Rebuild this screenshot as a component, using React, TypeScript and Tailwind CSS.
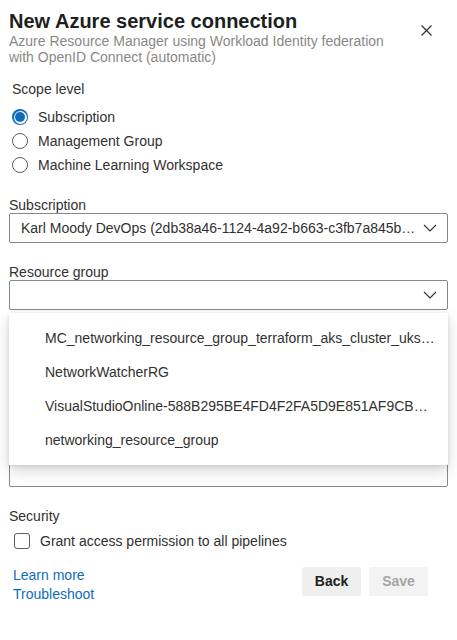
import { useState } from "react";

const scopes = ["Subscription", "Management Group", "Machine Learning Workspace"];

const resourceGroups = [
  "MC_networking_resource_group_terraform_aks_cluster_uksouth",
  "NetworkWatcherRG",
  "VisualStudioOnline-588B295BE4FD4F2FA5D9E851AF9CB…",
  "networking_resource_group",
];

const Chevron = () => (
  <svg width="14" height="8" viewBox="0 0 14 8" fill="none" className="shrink-0">
    <path d="M1 1l6 6 6-6" stroke="#323130" strokeWidth="1.1" />
  </svg>
);

const Radio = ({ checked }: { checked: boolean }) =>
  checked ? (
    <span className="flex h-4 w-4 items-center justify-center rounded-full bg-[#0f6cbd]">
      <span className="flex h-[13px] w-[13px] items-center justify-center rounded-full bg-white">
        <span className="block h-[10px] w-[10px] rounded-full bg-[#0f6cbd]" />
      </span>
    </span>
  ) : (
    <span className="block h-4 w-4 rounded-full border border-[#605e5c] bg-white" />
  );

export default function App() {
  const [scope, setScope] = useState(0);

  return (
    <div className="h-[640px] w-[457px] bg-white px-[9px] pt-[9px] text-[14px] text-[#323130] font-['Liberation_Sans',Arial,sans-serif]">
      {/* header */}
      <div className="flex items-start justify-between">
        <div>
          <h1 className="text-[20px] font-bold leading-6 text-[#201f1e]">New Azure service connection</h1>
          <p className="leading-4 text-[#8a8886]">
            Azure Resource Manager using Workload Identity federation
            <br />
            with OpenID Connect (automatic)
          </p>
        </div>
        <button className="mr-[14px] mt-[13px] flex h-4 w-4 items-center justify-center">
          <svg width="11" height="11" viewBox="0 0 11 11">
            <path d="M0.5 0.5l10 10M10.5 0.5l-10 10" stroke="#323130" strokeWidth="1.2" />
          </svg>
        </button>
      </div>

      {/* scope */}
      <div className="mt-[14px] pl-[3px] leading-5">Scope level</div>
      <div className="mt-[6px] flex flex-col">
        {scopes.map((s, i) => (
          <label key={s} className="flex h-6 cursor-pointer items-center" onClick={() => setScope(i)}>
            <span className="ml-[3px] mr-[10px] flex shrink-0">
              <Radio checked={scope === i} />
            </span>
            <span>{s}</span>
          </label>
        ))}
      </div>

      {/* subscription */}
      <div className="mt-5 leading-4">Subscription</div>
      <div className="flex h-[30px] items-center gap-[6px] rounded-[2px] border border-[#8a8886] pl-[11px] pr-[10px]">
        <span className="min-w-0 flex-1 truncate">
          Karl Moody DevOps (2db38a46-1124-4a92-b663-c3fb7a845b2e)
        </span>
        <Chevron />
      </div>

      {/* resource group */}
      <div className="mt-[21px] leading-4">Resource group</div>
      <div className="relative">
        <div className="flex h-[30px] items-center justify-end rounded-[2px] border border-[#8a8886] pr-[10px]">
          <Chevron />
        </div>

        {/* dropdown */}
        <div className="absolute left-0 right-0 top-[33px] z-10 bg-white py-2 shadow-[0_6px_14px_rgba(0,0,0,0.16),0_1px_4px_rgba(0,0,0,0.1)]">
          {resourceGroups.map((g) => (
            <div key={g} className="flex h-[34px] items-center pl-9 pr-[10px]">
              <span className="truncate">{g}</span>
            </div>
          ))}
        </div>

        {/* fields hidden behind the dropdown */}
        <div className="mt-[21px] leading-4">Service connection name</div>
        <div className="h-[30px] rounded-[2px] border border-[#8a8886]" />
        <div className="mt-[21px] leading-4">Description (optional)</div>
        <div className="h-[73px] rounded-[2px] border border-[#8a8886]" />
      </div>

      {/* security */}
      <div className="mt-[21px] leading-4">Security</div>
      <label className="mt-[7px] flex h-5 items-center">
        <span className="ml-[5px] mr-[10px] block h-4 w-4 shrink-0 rounded-[3px] border border-[#605e5c]" />
        <span>Grant access permission to all pipelines</span>
      </label>

      {/* footer */}
      <div className="mt-[15px] flex items-start justify-between pr-5">
        <div className="flex flex-col pl-1 leading-[19px] text-[#0f6cbd]">
          <a href="#">Learn more</a>
          <a href="#">Troubleshoot</a>
        </div>
        <div className="mt-[1px] flex gap-2">
          <button className="h-[29px] w-[59px] rounded-[2px] bg-[#efefef] font-bold text-[#201f1e]">Back</button>
          <button disabled className="h-[29px] w-[59px] rounded-[2px] bg-[#f3f3f3] font-bold text-[#a6a6a6]">
            Save
          </button>
        </div>
      </div>
    </div>
  );
}
